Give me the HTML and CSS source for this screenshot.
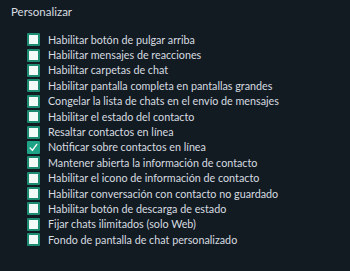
FILE: index.html
```html
<!DOCTYPE html>
<html>
<head>
<meta charset="utf-8">
<link rel="stylesheet" href="styles.css">
</head>
<body>
<div class="panel">
  <div class="title">Personalizar</div>
  <ul class="list">
    <li class="item"><span class="box"></span><span class="label">Habilitar botón de pulgar arriba</span></li>
    <li class="item"><span class="box"></span><span class="label">Habilitar mensajes de reacciones</span></li>
    <li class="item"><span class="box"></span><span class="label">Habilitar carpetas de chat</span></li>
    <li class="item"><span class="box"></span><span class="label">Habilitar pantalla completa en pantallas grandes</span></li>
    <li class="item"><span class="box"></span><span class="label">Congelar la lista de chats en el envío de mensajes</span></li>
    <li class="item"><span class="box"></span><span class="label">Habilitar el estado del contacto</span></li>
    <li class="item"><span class="box"></span><span class="label">Resaltar contactos en línea</span></li>
    <li class="item"><span class="box checked"><svg viewBox="0 0 13 13" width="13" height="13"><path d="M3.2 7 L5.4 9.4 L9.8 3.4" fill="none" stroke="#ffffff" stroke-width="1.4" stroke-linecap="round" stroke-linejoin="round"/></svg></span><span class="label">Notificar sobre contactos en línea</span></li>
    <li class="item"><span class="box"></span><span class="label">Mantener abierta la información de contacto</span></li>
    <li class="item"><span class="box"></span><span class="label">Habilitar el icono de información de contacto</span></li>
    <li class="item"><span class="box"></span><span class="label">Habilitar conversación con contacto no guardado</span></li>
    <li class="item"><span class="box"></span><span class="label">Habilitar botón de descarga de estado</span></li>
    <li class="item"><span class="box"></span><span class="label">Fijar chats ilimitados (solo Web)</span></li>
    <li class="item"><span class="box"></span><span class="label">Fondo de pantalla de chat personalizado</span></li>
  </ul>
</div>
</body>
</html>
```
FILE: styles.css
```css
html, body {
  margin: 0;
  padding: 0;
  background: #131b22;
}
.panel {
  width: 350px;
  height: 271px;
  background: #131b22;
  color: #d6dce0;
  font-family: "Lato", "Open Sans", sans-serif;
  font-size: 10.75px;
  box-sizing: border-box;
  padding: 4px 0 0 11px;
}
.title {
  font-size: 11.5px;
  line-height: 16px;
  color: #d7dde0;
}
.list {
  list-style: none;
  margin: 12px 0 0 16px;
  padding: 0;
  display: flex;
  flex-direction: column;
}
.item {
  display: flex;
  align-items: center;
  height: 15.4px;
  flex: none;
  gap: 8px;
}
.box {
  width: 13px;
  height: 13px;
  box-sizing: border-box;
  border: 2px solid #1d8a72;
  background: #f2fbf8;
  border-radius: 1px;
  flex: none;
  position: relative;
}
.box svg {
  position: absolute;
  left: -2px;
  top: -2px;
}
.box.checked {
  background: #1fa386;
  border-color: #1fa386;
}
.label {
  white-space: nowrap;
  line-height: 14px;
}
```
